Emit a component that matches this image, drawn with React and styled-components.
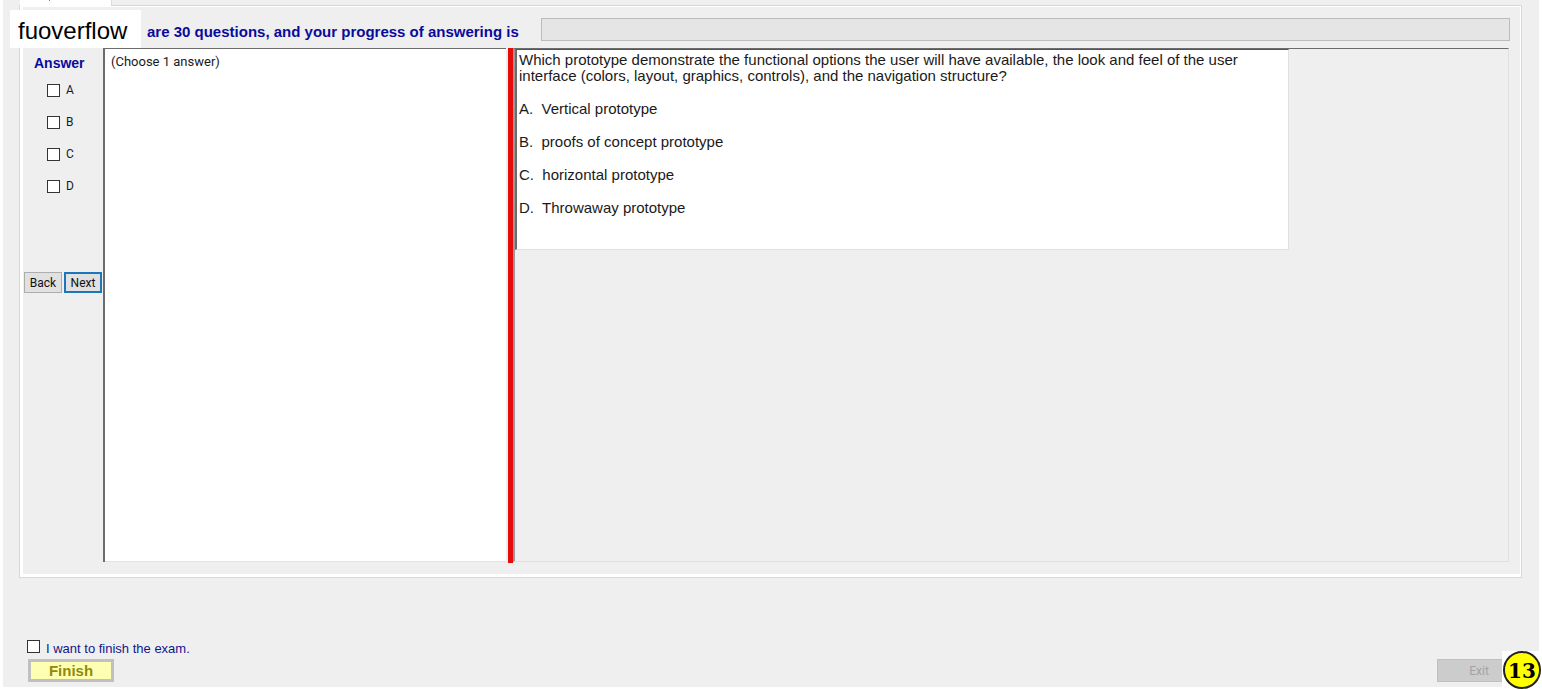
import { useState } from "react";
import styled, { createGlobalStyle } from "styled-components";

const GlobalStyle = createGlobalStyle`
	* {
		box-sizing: border-box;
	}
	body {
		margin: 0;
		background-color: #fff;
		font-family: Roboto, Arial, sans-serif;
		color: #1a1a1a;
	}
	button, input, progress, fieldset {
		margin: 0;
		padding: 0;
		font-family: inherit;
	}
`;

const arial = `"Liberation Sans", Arial, sans-serif`;

const Window = styled.div`
	position: relative;
	display: flex;
	flex-direction: column;
	min-height: calc(100vh - 3px);
	margin: 0 3px 3px;
	background-color: #efefef;
`;

const TabStrip = styled.div`
	display: flex;
	height: 5px;
	padding-left: 17px;
`;

const Tab = styled.div`
	width: 92px;
	height: 6px;
	padding-left: 29px;
	background-color: #fff;
	border-right: 1px solid #dcdcdc;
	z-index: 1;
	&::before {
		content: "";
		display: block;
		width: 1px;
		height: 1px;
		background-color: #777;
	}
`;

const Panel = styled.main`
	flex: 1;
	display: flex;
	flex-direction: column;
	margin: 0 17px 0 16px;
	padding-bottom: 15px;
	border: 1px solid #d8d8d8;
	box-shadow: inset 3px -3px 0 #fff, inset -1px 1px 0 #fff;
`;

const Header = styled.header`
	display: flex;
	align-items: center;
	height: 42px;
	padding: 4px 11px 0 127px;
	gap: 16px;
	> label {
		flex: 0 0 378px;
		padding-top: 6px;
		font-family: ${arial};
		font-size: 15px;
		line-height: 16px;
		font-weight: bold;
		color: #0a0a9c;
		white-space: nowrap;
	}
`;

const Progress = styled.progress`
	appearance: none;
	flex: 1;
	min-width: 0;
	height: 23px;
	border: 1px solid #bcbcbc;
	background-color: #e5e5e5;
	&::-webkit-progress-bar {
		background-color: #e5e5e5;
	}
	&::-webkit-progress-value {
		background-color: #06b025;
	}
`;

const Workspace = styled.div`
	flex: 1;
	display: flex;
	padding: 0 12px 0 3px;
`;

const AnswerColumn = styled.section`
	display: flex;
	flex-direction: column;
	width: 80px;
`;

const AnswerList = styled.fieldset`
	display: flex;
	flex-direction: column;
	height: 224px;
	border: none;
	> legend {
		padding: 7px 0 11px 11px;
		font-family: ${arial};
		font-size: 14px;
		line-height: 16px;
		font-weight: bold;
		color: #0a0a9c;
	}
`;

const CheckLabel = styled.label`
	display: flex;
	align-items: center;
	gap: 6px;
	font-size: 12px;
	line-height: 16px;
	height: 16px;
	margin: 0 0 16px 24px;
`;

const CheckBox = styled.input`
	appearance: none;
	width: 13px;
	height: 13px;
	border: 1px solid #333;
	background-color: #fff;
	&:checked {
		box-shadow: inset 0 0 0 2px #fff;
		background-color: #333;
	}
`;

const NavButtons = styled.div`
	display: flex;
	gap: 2px;
	padding-left: 1px;
`;

const NavButton = styled.button`
	width: 38px;
	height: 21px;
	font-size: 12px;
	line-height: 16px;
	color: #111;
	background-color: #e1e1e1;
	border: ${(props) => (props.$focused ? "2px solid #1a78b8" : "1px solid #adadad")};
`;

const ChoicePane = styled.section`
	width: 403px;
	padding: 5px 6px;
	background-color: #fff;
	border: solid #6c6c6c;
	border-width: 1px 0 0 2px;
	box-shadow: inset 0 -1px 0 #e3e3e3;
	font-size: 13px;
	line-height: 16px;
`;

const Splitter = styled.div`
	width: 5px;
	margin-left: 2px;
	margin-bottom: -1px;
	background-color: #e60c0c;
`;

const QuestionPane = styled.section`
	flex: 1;
	min-width: 0;
	border: 1px solid #e0e0e0;
	border-top: 1px solid #6c6c6c;
	border-left: 2px solid #9a9a9a;
`;

const Question = styled.article`
	max-width: 774px;
	height: 201px;
	padding: 2px 6px 0 2px;
	background-color: #fff;
	border: 1px solid #e0e0e0;
	border-top: 1px solid #555;
	border-left: 2px solid #6c6c6c;
	font-family: ${arial};
	font-size: 15px;
	> p {
		margin: 0;
		line-height: 16px;
	}
`;

const OptionLine = styled.div`
	margin-top: 16px;
	line-height: 17px;
	white-space: pre;
`;

const Footer = styled.footer`
	display: flex;
	justify-content: space-between;
	align-items: flex-end;
	height: 109px;
	padding: 0 18px 5px 24px;
`;

const FinishLabel = styled.label`
	display: flex;
	gap: 6px;
	height: 18px;
	margin-bottom: 1px;
	font-family: ${arial};
	font-size: 13px;
	line-height: 16px;
	color: #14148c;
	> span {
		padding-top: 1px;
	}
`;

const FinishButton = styled.button`
	width: 86px;
	height: 23px;
	margin-left: 1px;
	border: 3px solid #c0c0c0;
	background-color: #ffffb4;
	font-family: ${arial};
	font-size: 15px;
	line-height: 16px;
	font-weight: bold;
	color: #8c8c0a;
`;

const ExitButton = styled.button`
	width: 84px;
	height: 23px;
	border: 1px solid #c0c0c0;
	background-color: #ccc;
	font-size: 12px;
	line-height: 16px;
	color: #a3a3a3;
`;

const SiteMark = styled.div`
	position: absolute;
	top: 10px;
	left: 7px;
	z-index: 2;
	width: 131px;
	height: 38px;
	padding-left: 8px;
	background-color: #fff;
	font-family: ${arial};
	font-size: 24px;
	line-height: 42px;
	color: #000;
`;

const PageBadge = styled.div`
	position: absolute;
	right: -3px;
	bottom: -3px;
	padding: 0 1px 1px;
	background-color: #fff;
	> div {
		width: 38px;
		height: 38px;
		border: 2px solid #222;
		border-radius: 50%;
		background-color: #ff0;
		font-family: "DejaVu Serif", serif;
		font-size: 20px;
		line-height: 36px;
		font-weight: bold;
		text-align: center;
		color: #000;
	}
`;

const options = [
	{ key: "A", text: "Vertical prototype" },
	{ key: "B", text: "proofs of concept prototype" },
	{ key: "C", text: "horizontal prototype" },
	{ key: "D", text: "Throwaway prototype" },
];

export default function App() {
	const [answers, setAnswers] = useState({});
	const [finish, setFinish] = useState(false);

	const toggle = (key) => setAnswers({ ...answers, [key]: !answers[key] });

	return (
		<>
			<GlobalStyle />
			<Window>
				<TabStrip><Tab /></TabStrip>
				<Panel>
					<Header>
						<label htmlFor="progress">are 30 questions, and your progress of answering is</label>
						<Progress id="progress" value="0" max="30" />
					</Header>
					<Workspace>
						<AnswerColumn>
							<AnswerList>
								<legend>Answer</legend>
								{options.map(({ key }) => (
									<CheckLabel key={key}>
										<CheckBox type="checkbox" checked={!!answers[key]} onChange={() => toggle(key)} />
										<span>{key}</span>
									</CheckLabel>
								))}
							</AnswerList>
							<NavButtons>
								<NavButton type="button">Back</NavButton>
								<NavButton type="button" $focused>Next</NavButton>
							</NavButtons>
						</AnswerColumn>
						<ChoicePane>(Choose 1 answer)</ChoicePane>
						<Splitter />
						<QuestionPane>
							<Question>
								<p>
									Which prototype demonstrate the functional options the user will have available, the look and feel of the user
									interface (colors, layout, graphics, controls), and the navigation structure?
								</p>
								{options.map(({ key, text }) => (
									<OptionLine key={key}>{`${key}.  ${text}`}</OptionLine>
								))}
							</Question>
						</QuestionPane>
					</Workspace>
				</Panel>
				<Footer>
					<div>
						<FinishLabel>
							<CheckBox type="checkbox" checked={finish} onChange={() => setFinish(!finish)} />
							<span>I want to finish the exam.</span>
						</FinishLabel>
						<FinishButton type="button">Finish</FinishButton>
					</div>
					<ExitButton type="button" disabled>Exit</ExitButton>
				</Footer>
				<SiteMark>fuoverflow</SiteMark>
				<PageBadge><div>13</div></PageBadge>
			</Window>
		</>
	);
}
